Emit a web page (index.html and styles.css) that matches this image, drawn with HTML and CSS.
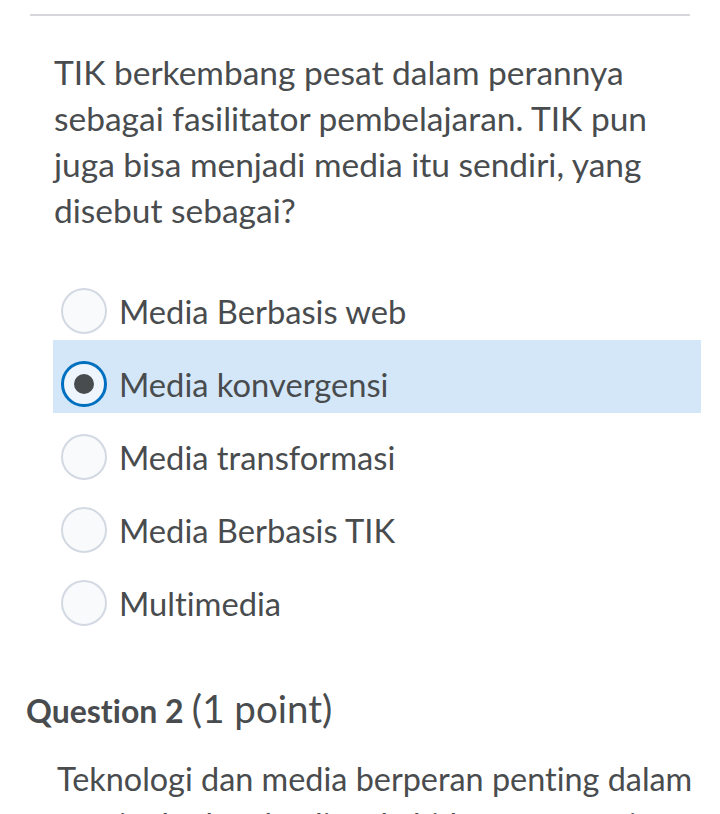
FILE: index.html
```html
<!DOCTYPE html>
<html lang="en">
<head>
    <meta charset="UTF-8">
    <meta name="viewport" content="width=device-width, initial-scale=1.0">
    <title>Quiz</title>
    <link rel="stylesheet" href="styles.css">
</head>
<body>
<div class="quiz">
    <hr class="divider">

    <div class="question">
        <p class="question-text">TIK berkembang pesat dalam perannya sebagai fasilitator pembelajaran. TIK pun juga bisa menjadi media itu sendiri, yang disebut sebagai?</p>

        <div class="options">
            <label class="option">
                <span class="radio"></span>
                <span class="option-label">Media Berbasis web</span>
            </label>
            <label class="option selected">
                <span class="radio checked"></span>
                <span class="option-label">Media konvergensi</span>
            </label>
            <label class="option">
                <span class="radio"></span>
                <span class="option-label">Media transformasi</span>
            </label>
            <label class="option">
                <span class="radio"></span>
                <span class="option-label">Media Berbasis TIK</span>
            </label>
            <label class="option">
                <span class="radio"></span>
                <span class="option-label">Multimedia</span>
            </label>
        </div>
    </div>

    <div class="question">
        <h3 class="question-title"><strong>Question 2</strong> <span class="points">(1 point)</span></h3>
        <p class="question-text second">Teknologi dan media berperan penting dalam meningkatkan kualitas kehidupan manusia</p>
    </div>
</div>
</body>
</html>
```

FILE: styles.css
```css
:root {
    --text: #494c4e;
    --rule: #d6d6dc;
    --radio-border: #d3d9e3;
    --radio-bg: #f9fafb;
    --selected-bg: #d4e7f8;
    --accent: #006fbf;
}

body {
    margin: 0;
    background: #ffffff;
    color: var(--text);
    font-family: Lato, "Open Sans", sans-serif;
    font-variant-ligatures: none;
    overflow: hidden;
}

.quiz {
    width: 720px;
}

.divider {
    margin: 14px 30px 0;
    border: none;
    border-top: 2px solid var(--rule);
}

.question-text {
    margin: 33px 0 0;
    padding: 0 28px 0 54px;
    font-size: 33.5px;
    line-height: 46px;
}

.options {
    margin-top: 34px;
}

.option {
    display: flex;
    align-items: center;
    gap: 12px;
    width: 648px;
    height: 73px;
    box-sizing: border-box;
    margin-left: 53px;
    padding: 15px 0 0 8px;
    font-size: 32.7px;
}

.option.selected {
    background: var(--selected-bg);
}

.radio {
    flex: none;
    width: 46px;
    height: 46px;
    box-sizing: border-box;
    border: 2px solid var(--radio-border);
    border-radius: 50%;
    background: var(--radio-bg);
    display: flex;
    align-items: center;
    justify-content: center;
}

.radio.checked {
    border: 3.5px solid var(--accent);
    background: #eef5fc;
}

.radio.checked::after {
    content: "";
    width: 20px;
    height: 20px;
    border-radius: 50%;
    background: var(--text);
}

.question-title {
    margin: 56px 0 0 26px;
    font-size: 32px;
    font-weight: 400;
    line-height: 40px;
}

.question-title strong {
    font-weight: 700;
}

.question-title .points {
    font-size: 38.5px;
}

.question-text.second {
    margin-top: 25px;
    padding-left: 57px;
    padding-right: 0;
    font-size: 32.4px;
}
```
